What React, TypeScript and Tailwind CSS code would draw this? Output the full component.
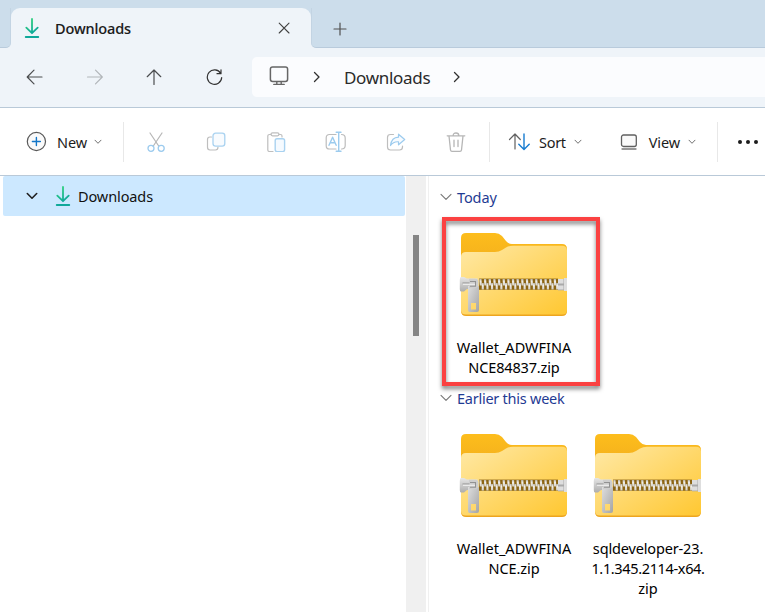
import type { ReactNode } from 'react';

const Icon = ({ w = 20, h = 20, className = '', children }: { w?: number; h?: number; className?: string; children: ReactNode }) => (
  <svg width={w} height={h} viewBox={`0 0 ${w} ${h}`} fill="none" strokeLinecap="round" strokeLinejoin="round" className={`block shrink-0 ${className}`}>
    {children}
  </svg>
);

function DownloadIcon({ id, className = '' }: { id: string; className?: string }) {
  return (
    <Icon w={16} h={20} className={className}>
      <defs>
        <linearGradient id={id} x1="1" y1="0" x2="13" y2="20" gradientUnits="userSpaceOnUse">
          <stop offset="0.2" stopColor="#2dcd80" />
          <stop offset="0.75" stopColor="#0fa89b" />
        </linearGradient>
      </defs>
      <path d="M8 1V14.5M2.3 9.6L8 15.2L13.7 9.6M1.7 19H14.3" stroke={`url(#${id})`} strokeWidth="1.8" />
    </Icon>
  );
}

const Chevron = ({ className = '' }: { className?: string }) => (
  <Icon w={8} h={6} className={className}><path d="M1 1.2L4 4.3L7 1.2" stroke="#707070" strokeWidth="1" /></Icon>
);

const CrumbChevron = () => (
  <Icon w={8} h={12}><path d="M1.5 1.5L6 6L1.5 10.5" stroke="#303030" strokeWidth="1.3" /></Icon>
);

const teeth = Array.from({ length: 17 }, (_, i) => 20.3 + i * 4.65);

function ZipFolder({ id }: { id: string }) {
  return (
    <svg width="110" height="86" viewBox="0 0 110 86" className="block shrink-0">
      <defs>
        <linearGradient id={`${id}-back`} x1="0" y1="0" x2="0" y2="1">
          <stop offset="0" stopColor="#fdbd1c" />
          <stop offset="0.35" stopColor="#f4b01d" />
          <stop offset="1" stopColor="#eda51f" />
        </linearGradient>
        <linearGradient id={`${id}-front`} x1="0" y1="0" x2="1" y2="1">
          <stop offset="0.05" stopColor="#ffe7a0" />
          <stop offset="0.95" stopColor="#ffc937" />
        </linearGradient>
        <linearGradient id={`${id}-metal`} x1="0" y1="0" x2="0" y2="1">
          <stop offset="0" stopColor="#e6e6e6" />
          <stop offset="0.45" stopColor="#cdcdcd" />
          <stop offset="1" stopColor="#adadad" />
        </linearGradient>
        <linearGradient id={`${id}-pull`} x1="0" y1="0" x2="1" y2="1">
          <stop offset="0" stopColor="#dedede" />
          <stop offset="1" stopColor="#a4a4a4" />
        </linearGradient>
        <linearGradient id={`${id}-tooth`} x1="0" y1="0" x2="0" y2="1">
          <stop offset="0" stopColor="#b9b4a6" />
          <stop offset="0.35" stopColor="#f2f0ea" />
          <stop offset="1" stopColor="#d3d0c8" />
        </linearGradient>
      </defs>
      <path d="M2 6Q2 1 7 1H36Q40 1 43 4L47 9Q49.5 12 53 12H103Q108 12 108 17V79Q108 84 103 84H7Q2 84 2 79Z" fill={`url(#${id}-back)`} />
      <path d="M2 25Q2 20 7 20H36Q40 20 43 18L47 15.5Q50 13.8 54 13.8H103Q108 13.8 108 18.5V78Q108 82.6 103 82.6H7Q2 82.6 2 78Z" fill={`url(#${id}-front)`} />
      <rect x="20" y="46.6" width="79" height="11.2" fill="#8c6514" />
      {teeth.map((x) => (
        <g key={x} fill={`url(#${id}-tooth)`}>
          <path d={`M${x} 47H${x + 2.2}L${x + 2.6} 53.5H${x + 0.4}Z`} />
          <path d={`M${x + 2.5} 51H${x + 4.4}L${x + 4.6} 57.5H${x + 2.4}Z`} />
        </g>
      ))}
      <path d="M99 47H107.5V58.3H99Z" fill="#aaa" />
      <path d="M99 47H104.5V51.5H99ZM99 53.5H104.5V57.5H99ZM105 46H108V59H105Z" fill="#dedede" />
      <path d="M2 45H5L8 46.5H18.5V57H8L5 59.5H2Q.8 59.5 .8 57V48Q.8 45 2 45Z" fill={`url(#${id}-metal)`} />
      <path fillRule="evenodd" d="M9 54H20V78Q20 80 18 80H10.8Q9 80 9 78ZM12 71V77.5H17V71Z" fill={`url(#${id}-pull)`} />
      <path d="M10 46.7H16Q19.5 46.7 19.5 50V53Q19.5 56 16 56H10Z" fill="#cecece" />
      <path d="M3.5 51H10.5M11 49.5H16.5V54.3H11" fill="none" stroke="#929292" strokeWidth="1.1" />
      <path d="M4 52.3H16" stroke="#eee" strokeWidth="1.2" />
    </svg>
  );
}

function FileItem({ id, lines }: { id: string; lines: { text: string; cls: string }[] }) {
  return (
    <div className="flex w-[134px] flex-col items-center">
      <ZipFolder id={id} />
      <div className="mt-[19px] flex flex-col items-center text-[14.5px] leading-[20px] text-black">
        {lines.map((l) => <span key={l.text} className={`whitespace-nowrap ${l.cls}`}>{l.text}</span>)}
      </div>
    </div>
  );
}

function GroupHeading({ children, cls }: { children: string; cls: string }) {
  return (
    <div className="flex h-[20px] items-center pl-[11px]">
      <Icon w={12} h={8}><path d="M1 1.3L6 6.3L11 1.3" stroke="#777" strokeWidth="1.1" /></Icon>
      <span className={`ml-[5px] whitespace-nowrap text-[14.5px] leading-[20px] text-[#1f3b93] ${cls}`}>{children}</span>
    </div>
  );
}

function TabStrip() {
  return (
    <div className="flex h-[48px] bg-[#ccddeb] pt-[8px]">
      <div className="w-[11px] bg-[#eff4f9]"><div className="h-full w-full rounded-br-[5px] border-b border-r border-b-[#b9cbdc] border-r-[#c3d4e3] bg-[#ccddeb]" /></div>
      <div className="flex w-[300px] items-center rounded-t-[9px] bg-[#eff4f9] pl-[13px] pr-[20px]">
        <DownloadIcon id="dl-tab" />
        <span className="ml-[15px] mt-px text-[14.5px] font-medium tracking-[-0.12px] text-[#1a1a1a] [-webkit-text-stroke:0.12px_#1a1a1a]">Downloads</span>
        <Icon w={14} h={14} className="ml-auto"><path d="M2.2 2.2L12 12M12 2.2L2.2 12" stroke="#404040" strokeWidth="1.1" /></Icon>
      </div>
      <div className="flex-1 bg-[#eff4f9]">
        <div className="flex h-full items-center rounded-bl-[5px] border-b border-l border-b-[#b9cbdc] border-l-[#c3d4e3] bg-[#ccddeb] pl-[21px]">
          <Icon w={14} h={14} className="mt-[3px]"><path d="M7 1V13M1 7H13" stroke="#505050" strokeWidth="1.2" /></Icon>
        </div>
      </div>
    </div>
  );
}

function NavBar() {
  return (
    <div className="flex h-[60px] items-center border-b border-[#b9c9d8] bg-[#eff4f9] pb-[2px]">
      <div className="flex w-[252px] shrink-0 items-center gap-[42px] pl-[26px]">
        <Icon w={18} h={18}><path d="M16 9H1.5M8 2.2L1.2 9L8 15.8" stroke="#4b4d4f" strokeWidth="1.2" /></Icon>
        <Icon w={18} h={18}><path d="M1.5 9H16M9.5 2.2L16.3 9L9.5 15.8" stroke="#b2b6ba" strokeWidth="1.2" /></Icon>
        <Icon w={18} h={18}><path d="M8 16.5V2M1.2 8.7L8 2L14.8 8.7" stroke="#4b4d4f" strokeWidth="1.2" /></Icon>
        <Icon w={18} h={18}><path d="M14.7 5.4A7.2 7.2 0 1 0 15.7 9.5M15 1.8V5.7H11" stroke="#333" strokeWidth="1.2" /></Icon>
      </div>
      <div className="flex h-[40px] flex-1 items-center rounded-l-[5px] bg-[#fbfcfe] pl-[16px]">
        <Icon w={21} h={20} className="-mt-px">
          <rect x="2.4" y=".9" width="17.2" height="14.6" rx="2.2" stroke="#666" strokeWidth="1.5" />
          <path d="M8.8 16V18M13.2 16V18M5.8 18.4H16.2" stroke="#666" strokeWidth="1.4" />
        </Icon>
        <div className="ml-[24px]"><CrumbChevron /></div>
        <span className="ml-[23px] mt-[2px] text-[17px] tracking-[-0.3px] text-[#2a2a2a]">Downloads</span>
        <div className="ml-[23px]"><CrumbChevron /></div>
      </div>
    </div>
  );
}

const Label = ({ children, cls }: { children: string; cls: string }) => (
  <span className={`mt-[2px] text-[14.5px] text-[#1c1c1c] ${cls}`}>{children}</span>
);

function Toolbar() {
  return (
    <div className="flex h-[68px] items-center border-b border-[#b9c9d8] bg-white">
      <div className="flex w-[123px] items-center pl-[26px]">
        <Icon w={21} h={21}>
          <circle cx="10.4" cy="10.5" r="9.1" fill="#fafafa" stroke="#585858" strokeWidth="1.2" />
          <path d="M10.4 6.5V14.5M6.4 10.5H14.4" stroke="#1376c8" strokeWidth="1.4" />
        </Icon>
        <Label cls="ml-[10px] tracking-[-0.1px]">New</Label>
        <Chevron className="ml-[7px]" />
      </div>
      <div className="h-[40px] w-px bg-[#e8e8e8]" />
      <div className="flex w-[365px] items-center gap-[40px] pl-[22px]">
        <Icon>
          <path d="M4 1L12.7 14M16 1L7.3 14" stroke="#b6b6b6" strokeWidth="1.2" />
          <circle cx="5" cy="16.3" r="3" stroke="#9ccbee" strokeWidth="1.3" /><circle cx="15.2" cy="16.3" r="3" stroke="#9ccbee" strokeWidth="1.3" />
        </Icon>
        <Icon>
          <path d="M5.5 5H4Q1.5 5 1.5 7.5V15.3Q1.5 18 4 18H9.5Q12 18 12 15" stroke="#bebebe" strokeWidth="1.2" />
          <rect x="7" y="1.2" width="11.8" height="13" rx="2.6" fill="#f8fbfe" stroke="#a9d2f0" strokeWidth="1.3" />
        </Icon>
        <Icon>
          <path d="M5 2.5H3.5Q1.8 2.5 1.8 4V18Q1.8 19.5 3.5 19.5H7M13 2.5H14.5Q16 2.5 16 4V5" stroke="#bebebe" strokeWidth="1.2" />
          <rect x="5" y=".8" width="8" height="3" rx="1.5" stroke="#bebebe" strokeWidth="1.2" />
          <rect x="9.2" y="6.8" width="9.4" height="12.8" rx="1.8" fill="#f5faff" stroke="#a9d2f0" strokeWidth="1.4" />
        </Icon>
        <Icon w={22} h={22} className="-mx-px">
          <path d="M11 3.5H4.5Q1.2 3.5 1.2 6.8V14.7Q1.2 18 4.5 18H11M16.5 3.5Q20.2 3.5 20.2 7V14.5Q20.2 18 16.5 18" stroke="#bcbcbc" strokeWidth="1.2" />
          <path d="M4 14.3L7.6 6.2L11.2 14.3M5.2 11.8H10M11.2 1.2H16M11.2 20.2H16M13.7 1.2V20.2" stroke="#9ccbee" strokeWidth="1.4" />
        </Icon>
        <Icon>
          <path d="M7.5 2.5H4.5Q1.5 2.5 1.5 5.5V15Q1.5 18 4.5 18H13.5Q16.5 18 16.5 15V14" stroke="#bebebe" strokeWidth="1.2" />
          <path d="M12.5 2.2L18.7 7.5L12.5 12.8V9.8Q7.5 9.3 4.5 13.5Q5.5 5.5 12.5 5.2Z" fill="#f7fbff" stroke="#9ccbee" strokeWidth="1.2" />
        </Icon>
        <Icon>
          <path d="M1.2 3.8H18.8M7.2 3.5Q7.2 1 10 1T12.8 3.5M3 4L4.5 18Q4.7 19.3 6 19.3H14Q15.3 19.3 15.5 18L17 4M8 8.2V14.5M12 8.2V14.5" stroke="#b6b6b6" strokeWidth="1.3" />
        </Icon>
      </div>
      <div className="h-[40px] w-px bg-[#e8e8e8]" />
      <div className="flex w-[227px] items-center pl-[18px]">
        <Icon w={22} h={20}>
          <path d="M7 17V2.5M1.5 7.5L7 2L12.3 7.5" stroke="#606060" strokeWidth="1.2" />
          <path d="M16 2V17.3M10.8 12.2L16 17.5L21.2 12.2" stroke="#177cd0" strokeWidth="1.4" />
        </Icon>
        <Label cls="ml-[9px] tracking-[-0.3px]">Sort</Label>
        <Chevron className="ml-[8px]" />
        <Icon w={18} h={18} className="ml-[38px]">
          <rect x="1.5" y="2" width="14.8" height="11.5" rx="2" fill="#fafafa" stroke="#606060" strokeWidth="1.3" />
          <path d="M2 16H16" stroke="#777" strokeWidth="1.3" />
        </Icon>
        <Label cls="ml-[11px] tracking-[-0.1px]">View</Label>
        <Chevron className="ml-[8px]" />
      </div>
      <div className="h-[40px] w-px bg-[#e8e8e8]" />
      <div className="flex gap-[4px] pl-[20px]">
        {[0, 1, 2].map((i) => <div key={i} className="size-[4px] rounded-full bg-[#1c1c1c]" />)}
      </div>
    </div>
  );
}

export default function App() {
  return (
    <div className="flex h-[612px] w-[765px] flex-col overflow-hidden bg-white font-['Noto_Sans','Open_Sans',sans-serif]">
      <TabStrip />
      <NavBar />
      <Toolbar />
      <div className="flex min-h-0 flex-1">
        <div className="w-[406px] pl-[3px] pr-px">
          <div className="flex h-[40px] items-center rounded-[2px] bg-[#cce8ff] pl-[23px]">
            <Icon w={12} h={8}><path d="M1.3 1.5L6 6.2L10.7 1.5" stroke="#202020" strokeWidth="1.6" /></Icon>
            <DownloadIcon id="dl-tree" className="ml-[17px]" />
            <span className="ml-[7px] mt-[2px] text-[14.5px] tracking-[-0.1px] text-[#111]">Downloads</span>
          </div>
        </div>
        <div className="flex w-[20px] justify-center bg-[#f0f0f0] pt-[59px]">
          <div className="h-[101px] w-[6px] bg-[#858585]" />
        </div>
        <div className="ml-[2px] flex-1 border-l border-[#f0f0f0] pt-[11px]">
          <GroupHeading cls="tracking-[-0.1px]">Today</GroupHeading>
          <div className="relative flex h-[181px] pl-[18px] pt-[25px]">
            <FileItem id="wallet-a" lines={[{ text: 'Wallet_ADWFINA', cls: '' }, { text: 'NCE84837.zip', cls: 'tracking-[-0.15px]' }]} />
            <div className="pointer-events-none absolute left-[13px] top-[10px] h-[169px] w-[158px] border-4 border-[#fb4141] drop-shadow-[0_3px_2px_rgba(0,0,0,0.5)]" />
          </div>
          <GroupHeading cls="tracking-[-0.25px]">Earlier this week</GroupHeading>
          <div className="flex pl-[18px] pt-[25px]">
            <FileItem id="wallet-b" lines={[{ text: 'Wallet_ADWFINA', cls: '' }, { text: 'NCE.zip', cls: 'tracking-[-0.1px]' }]} />
            <FileItem id="sqldev" lines={[{ text: 'sqldeveloper-23.', cls: 'tracking-[-0.15px]' }, { text: '1.1.345.2114-x64.', cls: 'tracking-[-0.35px]' }, { text: 'zip', cls: '' }]} />
          </div>
        </div>
      </div>
    </div>
  );
}
